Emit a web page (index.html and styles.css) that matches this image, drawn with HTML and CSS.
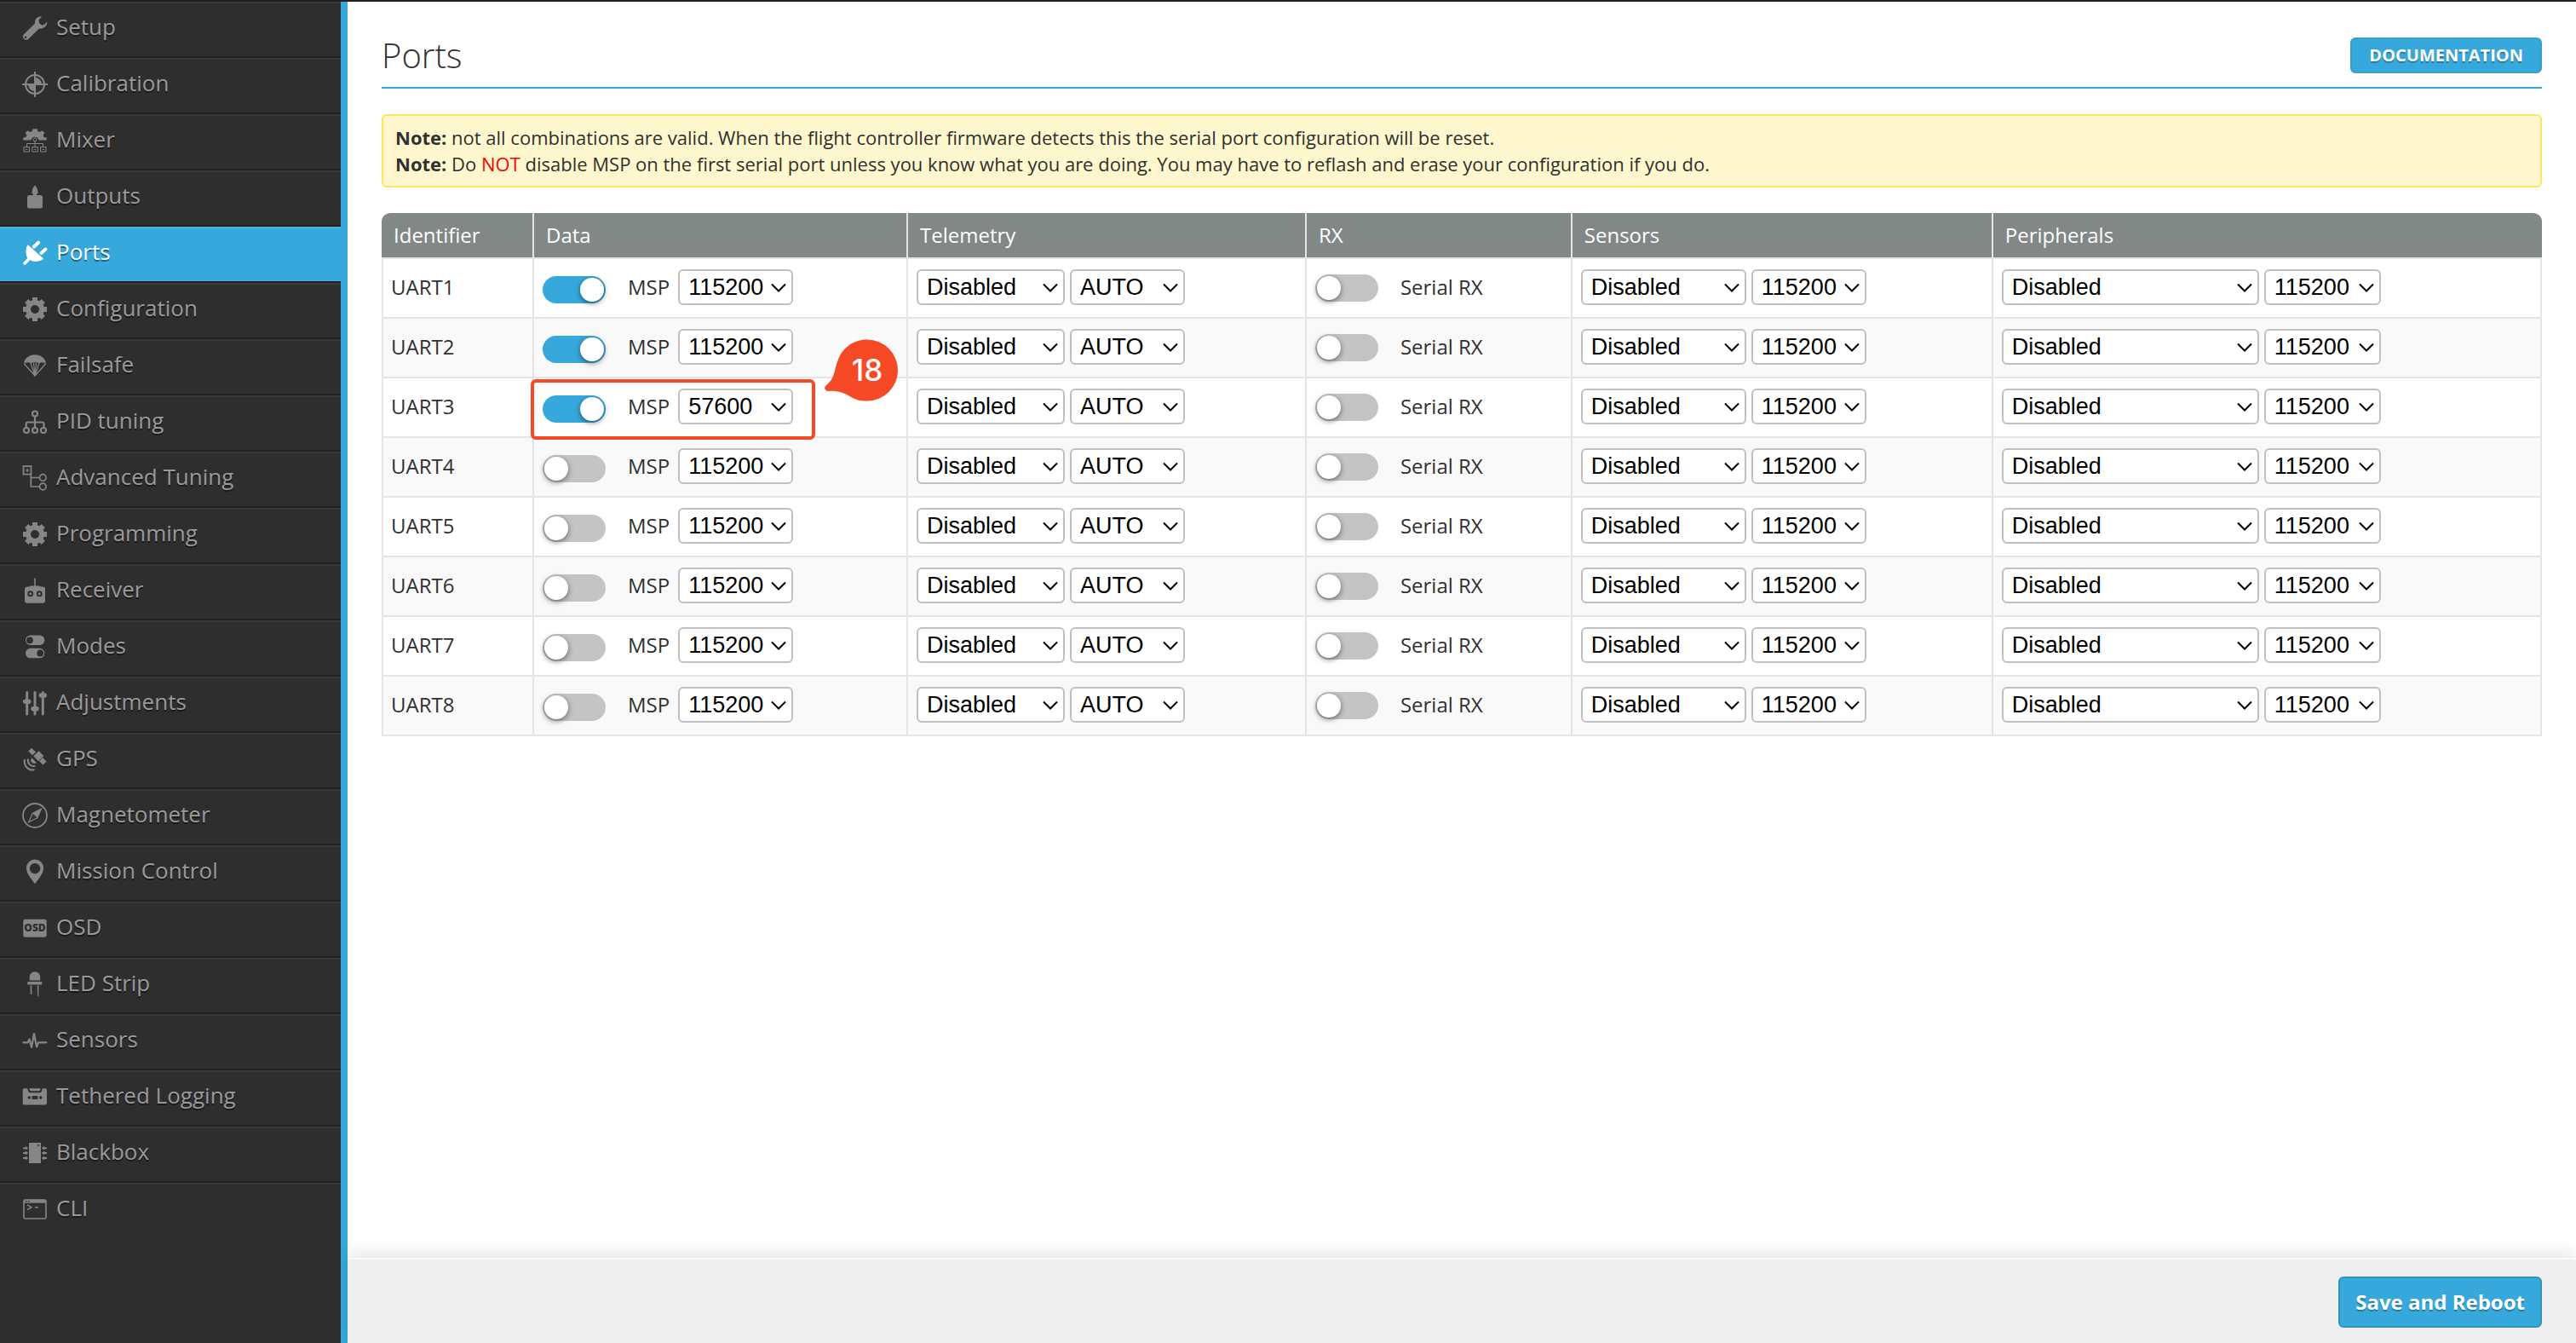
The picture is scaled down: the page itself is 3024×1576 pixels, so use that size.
FILE: index.html
```html
<!DOCTYPE html>
<html lang="en">
<head>
<meta charset="utf-8">
<title>Ports</title>
<link rel="stylesheet" href="styles.css">
</head>
<body>
<svg class="sprite" aria-hidden="true">
  <symbol id="gear" viewBox="0 0 30 30">
    <circle cx="15" cy="15" r="8" fill="none" stroke="currentColor" stroke-width="6"/>
    <g stroke="currentColor" stroke-width="6" stroke-linejoin="round">
      <path d="M15 1v5M15 24v5M1 15h5M24 15h5M5.2 5.2l3.4 3.4M21.4 21.4l3.4 3.4M24.8 5.2l-3.4 3.4M8.6 21.4l-3.4 3.4"/>
    </g>
  </symbol>
</svg>
<div class="app">
  <nav class="sidebar" aria-label="Tabs">
    <ul class="tabs">
      <li><a class="tab" href="#setup"><svg class="icon" viewBox="0 0 30 30"><path fill-rule="evenodd" d="M23 1.2C18.5.6 14.5 4 15 9.600L1.800 22.400C-1 26 3.500 30.800 7.200 28L20 15.600C25 16.500 29.600 12.500 29.300 7.300L26.300 10.700L22.800 11.500L20 9.200L19.600 5.500ZM4 24.600a1.200 1.200 0 1 0 .1 0Z"/></svg>Setup</a></li>
      <li><a class="tab" href="#calibration"><svg class="icon" viewBox="0 0 30 30"><circle cx="15" cy="15" r="11" fill="none" stroke="currentColor" stroke-width="2"/><path d="M15 0v30M0 15h30" stroke="currentColor" stroke-width="2"/><path d="M15 15V7a8 8 0 0 1 8 8ZM15 15v8a8 8 0 0 1-8-8Z"/></svg>Calibration</a></li>
      <li><a class="tab" href="#mixer"><svg class="icon" viewBox="0 0 30 30"><path d="M1.300 14.500V11.600L4.500 11 5.500 8.800 3.500 6 6.500 3.200 9.500 5 11.700 4 12.400 1.300h5.200L18.300 4 20.500 5 23.500 3.200 26.500 6 24.500 8.800 25.500 11 28.700 11.600V14.500H19.500a4.600 4.600 0 0 0-9 0Z"/><circle cx="15" cy="14" r="2" fill="none" stroke="currentColor"/><path d="M15 15v7M5.500 22v-3.500h19V22M2 22.500h6.500v5.500H2ZM11.800 22.500h6.500v5.500h-6.500ZM21.500 22.500H28v5.500h-6.500ZM4 25.300h2.500M13.800 25.300h2.500M23.500 25.300H26" fill="none" stroke="currentColor"/></svg>Mixer</a></li>
      <li><a class="tab" href="#outputs"><svg class="icon" viewBox="0 0 30 30"><path d="M15 1.500C17 3 18 6 18.700 10L18 11.500H17V13h4.500A2.500 2.500 0 0 1 24 15.500V26.500A2 2 0 0 1 22 28.500H8A2 2 0 0 1 6 26.500V15.500A2.500 2.500 0 0 1 8.500 13H13V11.500H12L11.300 10C12 6 13 3 15 1.500Z"/></svg>Outputs</a></li>
      <li><a class="tab active" href="#ports" aria-current="page"><svg class="icon" viewBox="0 0 30 30"><path d="M6.700 5.300L24 20.500C25.500 22 24 23.500 20 24.200 15 25.600 12 25 9.500 23L4 28.500C2.500 30 .2 27.300 1.500 26L6.300 21C4 17 4.300 12 5.200 7.500Z"/><path d="M14 7.500L19 2.700M22.500 15L27.300 10.600" stroke="currentColor" stroke-width="4" stroke-linecap="round"/></svg>Ports</a></li>
      <li><a class="tab" href="#configuration"><svg class="icon"><use href="#gear"/></svg>Configuration</a></li>
      <li><a class="tab" href="#failsafe"><svg class="icon" viewBox="0 0 30 30"><path d="M2 13C2.500 6.500 8 2.300 15 2.300S27.500 6.500 28 13Q24 10.200 20 12.200 15 10.200 10 12.200 6 10.200 2 13Z"/><path d="M2.500 13L15 27 27.500 13M10 12l5 15 5-15M13.500 12L15 27l1.500-15" fill="none" stroke="currentColor" stroke-width="1.200"/></svg>Failsafe</a></li>
      <li><a class="tab" href="#pid"><svg class="icon" viewBox="0 0 30 30"><g fill="none" stroke="currentColor" stroke-width="2.200"><circle cx="15" cy="5.500" r="3"/><circle cx="5" cy="25" r="3"/><circle cx="15" cy="25" r="3"/><circle cx="25" cy="25" r="3"/><path d="M15 8.500V22M4.700 22V17.500Q4.700 15.500 6.700 15.500H23.500Q25.500 15.500 25.500 17.500V22"/></g></svg>PID tuning</a></li>
      <li><a class="tab" href="#advanced"><svg class="icon" viewBox="0 0 30 30"><g fill="none" stroke="currentColor" stroke-width="1.700"><path d="M1.500 1.200h9v9.500h-9ZM10.300 10.700V25H20M10.300 14.500H20"/><circle cx="24.300" cy="14.500" r="3.800"/><circle cx="24.300" cy="25" r="3.800"/><path d="M3.800 6h4.600M6.100 3.700v4.600" stroke-width="1.200"/></g></svg>Advanced Tuning</a></li>
      <li><a class="tab" href="#programming"><svg class="icon"><use href="#gear"/></svg>Programming</a></li>
      <li><a class="tab" href="#receiver"><svg class="icon" viewBox="0 0 30 30"><path d="M14.200.5h1.600V9.500H20Q21 9.500 21.500 10.500H24A3 3 0 0 1 27 13.500V26.700A3 3 0 0 1 24 29.700H6A3 3 0 0 1 3 26.700V13.500A3 3 0 0 1 6 10.500H8.500Q9 9.500 10 9.500h4.200Z"/><g class="cut-line"><circle cx="9.700" cy="18.700" r="2.500"/><circle cx="20.300" cy="18.700" r="2.500"/></g></svg>Receiver</a></li>
      <li><a class="tab" href="#modes"><svg class="icon" viewBox="0 0 30 30"><rect x="4" y="1.500" width="22.300" height="11.500" rx="5.700"/><rect x="4" y="16.800" width="22.300" height="11.500" rx="5.700"/><g class="cut"><circle cx="9" cy="7.300" r="3.900"/><circle cx="21.200" cy="22.500" r="3.900"/></g></svg>Modes</a></li>
      <li><a class="tab" href="#adjustments"><svg class="icon" viewBox="0 0 30 30"><path d="M5.700 2.500V28M15 2.500V28M24.300 2.500V28" stroke="currentColor" stroke-width="3" stroke-linecap="round"/><path d="M3.700 13.300h4M13 21.700h4M22.300 6h4" stroke="currentColor" stroke-width="5.500" stroke-linecap="round"/></svg>Adjustments</a></li>
      <li><a class="tab" href="#gps"><svg class="icon" viewBox="0 0 30 30"><path d="M11 1.700L16 6.500 12 10.300 7.300 5.500ZM19.500 5.300L25.300 11 19 17.200 13.300 11.300ZM24 13L28.500 17.500 24.500 21.500 20 17.200ZM11.500 13.500L17 19.200C14.500 20.500 12.500 20 11 18.500S10 15 11.500 13.500Z"/><path d="M7 14.500C6 20 10 24 15.300 22.800M3 15C1.500 22.500 7 28.800 14.500 27.300" fill="none" stroke="currentColor" stroke-width="2"/></svg>GPS</a></li>
      <li><a class="tab" href="#magnetometer"><svg class="icon" viewBox="0 0 30 30"><circle cx="15" cy="15" r="14" fill="none" stroke="currentColor" stroke-width="1.800"/><path d="M22.500 7L17.800 17.800 12.300 12.400Z"/><path d="M22.500 7L17.800 17.800 7.700 22.700 12.300 12.400Z" fill="none" stroke="currentColor" stroke-width="1.200"/></svg>Magnetometer</a></li>
      <li><a class="tab" href="#mission"><svg class="icon" viewBox="0 0 30 30"><path fill-rule="evenodd" d="M15 .5A10 10 0 0 1 25 10.700C25 17 20 22 15 29.300 10 22 5 17 5 10.700A10 10 0 0 1 15 .5ZM15 5a6.200 6.200 0 1 0 .1 0Z"/></svg>Mission Control</a></li>
      <li><a class="tab" href="#osd"><svg class="icon" viewBox="0 0 30 30"><rect x="1.300" y="4.700" width="27.400" height="21" rx="2.500"/><text class="cut osd-mark" x="15" y="19" text-anchor="middle" aria-hidden="true">OSD</text></svg>OSD</a></li>
      <li><a class="tab" href="#led"><svg class="icon" viewBox="0 0 30 30"><path d="M8.700 10.500V6.500a6.200 6.200 0 0 1 12.500 0V10.500ZM6.300 12H23.200v3.500H6.300ZM9.500 16.500H11.300V27H9.800ZM17.700 16.500H19.500L19.300 29.300H18.300Z"/></svg>LED Strip</a></li>
      <li><a class="tab" href="#sensors"><svg class="icon" viewBox="0 0 30 30"><path d="M1.500 17.300H6.700L8.500 13.500 11 23 14 7 17 22.500 19 17.300H28.500" fill="none" stroke="currentColor" stroke-width="2.200" stroke-linejoin="round" stroke-linecap="round"/></svg>Sensors</a></li>
      <li><a class="tab" href="#logging"><svg class="icon" viewBox="0 0 30 30"><path d="M2.500 5.300H6L7.500 9.300Q8 10.300 9.500 10.300h11Q22 10.300 22.500 9.300L24 5.300h3A2 2 0 0 1 29 7.300v15.300A2 2 0 0 1 27 24.500H2.700A2 2 0 0 1 .7 22.500V7.300A2 2 0 0 1 2.500 5.300ZM8.500 5.300h13Q21.500 8.300 19.500 8.300h-9Q8.500 8.300 8.500 5.300Z"/><g class="cut"><circle cx="8.300" cy="16" r="1.800"/><circle cx="21.700" cy="16" r="1.800"/><rect x="11.700" y="14" width="6.600" height="4"/></g></svg>Tethered Logging</a></li>
      <li><a class="tab" href="#blackbox"><svg class="icon" viewBox="0 0 30 30"><rect x="8" y="3" width="14" height="24"/><path d="M1 9.300h5.500M1 15h5.500M1 21h5.500M23.500 9.300H29M23.500 15H29M23.500 21H29" stroke="currentColor" stroke-width="1.800"/><path d="M3.500 9.300h2M3.500 15h2M3.500 21h2M24.500 9.300h2M24.500 15h2M24.500 21h2" stroke="currentColor" stroke-width="3.400"/><circle class="cut" cx="19" cy="6" r="1"/></svg>Blackbox</a></li>
      <li><a class="tab" href="#cli"><svg class="icon" viewBox="0 0 30 30"><rect x="2" y="4" width="26" height="22" rx="1.500" fill="none" stroke="currentColor" stroke-width="1.600"/><path d="M2 4h26v3.700H2Z"/><path class="cut" d="M4 5h1.500v1.500H4ZM7 5h1.500v1.500H7Z"/><path d="M6 9.800L11 12.700 6 15.600M15 12.800h4" fill="none" stroke="currentColor" stroke-width="1.400"/></svg>CLI</a></li>
    </ul>
  </nav>
  <main class="main">
    <div class="content">
      <header class="title-bar">
        <h1>Ports</h1>
        <button class="button doc" type="button">Documentation</button>
      </header>
      <div class="note">
        <p><strong>Note:</strong> not all combinations are valid. When the flight controller firmware detects this the serial port configuration will be reset.</p>
        <p><strong>Note:</strong> Do <span class="warn">NOT</span> disable MSP on the first serial port unless you know what you are doing. You may have to reflash and erase your configuration if you do.</p>
      </div>
      <table class="ports">
        <colgroup><col class="c-id"><col class="c-data"><col class="c-tel"><col class="c-rx"><col class="c-sens"><col class="c-per"></colgroup>
        <thead><tr><th scope="col">Identifier</th><th scope="col">Data</th><th scope="col">Telemetry</th><th scope="col">RX</th><th scope="col">Sensors</th><th scope="col">Peripherals</th></tr></thead>
        <tbody>
          <tr>
            <td>UART1</td>
            <td><div class="cell"><label class="switch"><input type="checkbox" checked>MSP</label><select class="rate" aria-label="UART1 MSP rate"><option>115200</option></select></div></td>
            <td><div class="cell"><select class="tel" aria-label="UART1 telemetry"><option>Disabled</option></select><select class="rate" aria-label="UART1 telemetry rate"><option>AUTO</option></select></div></td>
            <td><div class="cell"><label class="switch rx"><input type="checkbox">Serial RX</label></div></td>
            <td><div class="cell"><select class="sens" aria-label="UART1 sensor"><option>Disabled</option></select><select class="rate" aria-label="UART1 sensor rate"><option>115200</option></select></div></td>
            <td><div class="cell"><select class="per" aria-label="UART1 peripheral"><option>Disabled</option></select><select class="rate" aria-label="UART1 peripheral rate"><option>115200</option></select></div></td>
          </tr>
          <tr>
            <td>UART2</td>
            <td><div class="cell"><label class="switch"><input type="checkbox" checked>MSP</label><select class="rate" aria-label="UART2 MSP rate"><option>115200</option></select></div></td>
            <td><div class="cell"><select class="tel" aria-label="UART2 telemetry"><option>Disabled</option></select><select class="rate" aria-label="UART2 telemetry rate"><option>AUTO</option></select></div></td>
            <td><div class="cell"><label class="switch rx"><input type="checkbox">Serial RX</label></div></td>
            <td><div class="cell"><select class="sens" aria-label="UART2 sensor"><option>Disabled</option></select><select class="rate" aria-label="UART2 sensor rate"><option>115200</option></select></div></td>
            <td><div class="cell"><select class="per" aria-label="UART2 peripheral"><option>Disabled</option></select><select class="rate" aria-label="UART2 peripheral rate"><option>115200</option></select></div></td>
          </tr>
          <tr>
            <td>UART3</td>
            <td class="marked"><div class="cell"><label class="switch"><input type="checkbox" checked>MSP</label><select class="rate" aria-label="UART3 MSP rate"><option>57600</option></select></div>
              <div class="frame"></div>
              <div class="callout"><svg viewBox="0 0 86 74" aria-hidden="true"><path d="M50 .5A36 36 0 1 1 50 72.500C42 72.500 38 71.500 33 69 24 64 18 60 5 61 0 61-1 56.500 1.500 54.500 8 49 10 45 12 37 13.500 31 14 29 16 24 21 10 34 .5 50 .5Z"/></svg><span>18</span></div>
            </td>
            <td><div class="cell"><select class="tel" aria-label="UART3 telemetry"><option>Disabled</option></select><select class="rate" aria-label="UART3 telemetry rate"><option>AUTO</option></select></div></td>
            <td><div class="cell"><label class="switch rx"><input type="checkbox">Serial RX</label></div></td>
            <td><div class="cell"><select class="sens" aria-label="UART3 sensor"><option>Disabled</option></select><select class="rate" aria-label="UART3 sensor rate"><option>115200</option></select></div></td>
            <td><div class="cell"><select class="per" aria-label="UART3 peripheral"><option>Disabled</option></select><select class="rate" aria-label="UART3 peripheral rate"><option>115200</option></select></div></td>
          </tr>
          <tr>
            <td>UART4</td>
            <td><div class="cell"><label class="switch"><input type="checkbox">MSP</label><select class="rate" aria-label="UART4 MSP rate"><option>115200</option></select></div></td>
            <td><div class="cell"><select class="tel" aria-label="UART4 telemetry"><option>Disabled</option></select><select class="rate" aria-label="UART4 telemetry rate"><option>AUTO</option></select></div></td>
            <td><div class="cell"><label class="switch rx"><input type="checkbox">Serial RX</label></div></td>
            <td><div class="cell"><select class="sens" aria-label="UART4 sensor"><option>Disabled</option></select><select class="rate" aria-label="UART4 sensor rate"><option>115200</option></select></div></td>
            <td><div class="cell"><select class="per" aria-label="UART4 peripheral"><option>Disabled</option></select><select class="rate" aria-label="UART4 peripheral rate"><option>115200</option></select></div></td>
          </tr>
          <tr>
            <td>UART5</td>
            <td><div class="cell"><label class="switch"><input type="checkbox">MSP</label><select class="rate" aria-label="UART5 MSP rate"><option>115200</option></select></div></td>
            <td><div class="cell"><select class="tel" aria-label="UART5 telemetry"><option>Disabled</option></select><select class="rate" aria-label="UART5 telemetry rate"><option>AUTO</option></select></div></td>
            <td><div class="cell"><label class="switch rx"><input type="checkbox">Serial RX</label></div></td>
            <td><div class="cell"><select class="sens" aria-label="UART5 sensor"><option>Disabled</option></select><select class="rate" aria-label="UART5 sensor rate"><option>115200</option></select></div></td>
            <td><div class="cell"><select class="per" aria-label="UART5 peripheral"><option>Disabled</option></select><select class="rate" aria-label="UART5 peripheral rate"><option>115200</option></select></div></td>
          </tr>
          <tr>
            <td>UART6</td>
            <td><div class="cell"><label class="switch"><input type="checkbox">MSP</label><select class="rate" aria-label="UART6 MSP rate"><option>115200</option></select></div></td>
            <td><div class="cell"><select class="tel" aria-label="UART6 telemetry"><option>Disabled</option></select><select class="rate" aria-label="UART6 telemetry rate"><option>AUTO</option></select></div></td>
            <td><div class="cell"><label class="switch rx"><input type="checkbox">Serial RX</label></div></td>
            <td><div class="cell"><select class="sens" aria-label="UART6 sensor"><option>Disabled</option></select><select class="rate" aria-label="UART6 sensor rate"><option>115200</option></select></div></td>
            <td><div class="cell"><select class="per" aria-label="UART6 peripheral"><option>Disabled</option></select><select class="rate" aria-label="UART6 peripheral rate"><option>115200</option></select></div></td>
          </tr>
          <tr>
            <td>UART7</td>
            <td><div class="cell"><label class="switch"><input type="checkbox">MSP</label><select class="rate" aria-label="UART7 MSP rate"><option>115200</option></select></div></td>
            <td><div class="cell"><select class="tel" aria-label="UART7 telemetry"><option>Disabled</option></select><select class="rate" aria-label="UART7 telemetry rate"><option>AUTO</option></select></div></td>
            <td><div class="cell"><label class="switch rx"><input type="checkbox">Serial RX</label></div></td>
            <td><div class="cell"><select class="sens" aria-label="UART7 sensor"><option>Disabled</option></select><select class="rate" aria-label="UART7 sensor rate"><option>115200</option></select></div></td>
            <td><div class="cell"><select class="per" aria-label="UART7 peripheral"><option>Disabled</option></select><select class="rate" aria-label="UART7 peripheral rate"><option>115200</option></select></div></td>
          </tr>
          <tr>
            <td>UART8</td>
            <td><div class="cell"><label class="switch"><input type="checkbox">MSP</label><select class="rate" aria-label="UART8 MSP rate"><option>115200</option></select></div></td>
            <td><div class="cell"><select class="tel" aria-label="UART8 telemetry"><option>Disabled</option></select><select class="rate" aria-label="UART8 telemetry rate"><option>AUTO</option></select></div></td>
            <td><div class="cell"><label class="switch rx"><input type="checkbox">Serial RX</label></div></td>
            <td><div class="cell"><select class="sens" aria-label="UART8 sensor"><option>Disabled</option></select><select class="rate" aria-label="UART8 sensor rate"><option>115200</option></select></div></td>
            <td><div class="cell"><select class="per" aria-label="UART8 peripheral"><option>Disabled</option></select><select class="rate" aria-label="UART8 peripheral rate"><option>115200</option></select></div></td>
          </tr>
        </tbody>
      </table>
    </div>
    <footer class="toolbar">
      <button class="button save" type="button">Save and Reboot</button>
    </footer>
  </main>
</div>
</body>
</html>
```
FILE: styles.css
```css
* {
  box-sizing: border-box;
}

body {
  margin: 0;
  font-family: "Open Sans", "Noto Sans", sans-serif;
  font-size: 24px;
  color: #303030;
  background: #fff;
}

.sprite {
  display: none;
}

.app {
  display: grid;
  grid-template-columns: 408px minmax(0, 1fr);
  min-height: 100vh;
  border-top: 2px solid #231f20;
}

/* Sidebar */
.sidebar {
  background: #2e2e2e;
  border-right: 8px solid #37a8db;
}

.tabs {
  margin: 0;
  padding: 0;
  list-style: none;
}

.tabs li {
  border-bottom: 2px solid #212121;
}

.tabs li:last-child {
  border-bottom: 0;
}

.tab {
  display: flex;
  align-items: center;
  gap: 10px;
  height: 64px;
  padding: 0 0 8px 26px;
  border-top: 2px solid #393939;
  color: #999;
  font-size: 26px;
  text-decoration: none;
  text-shadow: 0 2px rgba(0, 0, 0, 0.45);
}

.tab.active {
  color: #fff;
  background: #37a8db;
  border-top-color: #4bb0de;
}

.icon {
  width: 30px;
  height: 30px;
  margin-top: 4px;
  color: #868686;
  fill: currentColor;
}

.active .icon {
  color: #fff;
}

.cut {
  fill: #2e2e2e;
}

.cut-line {
  fill: none;
  stroke: #2e2e2e;
  stroke-width: 2px;
}

.osd-mark {
  font-size: 12px;
  font-weight: 800;
  text-shadow: none;
}

/* Main column */
.main {
  display: flex;
  flex-direction: column;
}

.content {
  flex: 1;
  padding: 36px 40px 40px;
}

.title-bar {
  display: flex;
  align-items: center;
  justify-content: space-between;
  padding-bottom: 10px;
  border-bottom: 2px solid #37a8db;
}

h1 {
  margin: 0;
  font-size: 40px;
  font-weight: 300;
  line-height: 54px;
}

.button {
  border: 2px solid #3394b5;
  border-radius: 6px;
  background: #37a8db;
  color: #fff;
  font-family: inherit;
  font-weight: 700;
  text-shadow: 0 2px rgba(0, 0, 0, 0.3);
  white-space: nowrap;
}

.doc {
  height: 42px;
  padding: 0 20px;
  border-color: #3a9fc8;
  font-size: 20px;
  line-height: 34px;
  text-transform: uppercase;
}

.note {
  margin-top: 30px;
  padding: 10px 14px;
  border: 2px solid #ffe55f;
  border-radius: 6px;
  background: #fff7cd;
  font-size: 22px;
  line-height: 31px;
}

.note p {
  margin: 0;
}

.warn {
  color: #f00;
}

/* Ports table */
.ports {
  width: 100%;
  margin-top: 30px;
  table-layout: fixed;
  border-collapse: separate;
  border-spacing: 0;
}

.c-id { width: 7.06%; }
.c-data { width: 17.31%; }
.c-tel { width: 18.45%; }
.c-rx { width: 12.3%; }
.c-sens { width: 19.48%; }
.c-per { width: 25.4%; }

.ports th {
  height: 54px;
  padding: 0 14px 2px;
  border-right: 2px solid #e4e4e4;
  border-bottom: 2px solid #e4e4e4;
  background: #828885;
  color: #fff;
  font-weight: 400;
  text-align: left;
}

.ports th:first-child {
  border-top-left-radius: 10px;
}

.ports th:last-child {
  border-right: 0;
  border-top-right-radius: 10px;
}

.ports td {
  height: 70px;
  padding: 0 10px;
  border-right: 2px solid #e4e4e4;
  border-bottom: 2px solid #e4e4e4;
}

.ports td:first-child {
  padding: 0 9px 4px;
  border-left: 2px solid #e4e4e4;
}

.ports tbody tr:nth-child(even) {
  background: #f9f9f9;
}

.cell {
  display: flex;
  align-items: center;
  gap: 6px;
  height: 42px;
  margin-bottom: 2px;
}

.switch {
  display: flex;
  align-items: center;
  gap: 26px;
  line-height: 40px;
  margin-right: 4px;
}

.switch input {
  appearance: none;
  width: 74px;
  height: 32px;
  margin: 6px 0 0;
  padding: 2px;
  border-radius: 16px;
  background: #c4c4c4;
}

.switch.rx input {
  margin-top: 2px;
}

.switch input::before {
  content: "";
  display: block;
  width: 28px;
  height: 28px;
  border-radius: 50%;
  background: #fff;
  box-shadow: 0 2px 6px rgba(0, 0, 0, 0.5);
}

.switch input:checked {
  background: #37a8db;
}

.switch input:checked::before {
  margin-left: auto;
}

select {
  appearance: none;
  height: 42px;
  padding: 0 24px 0 10px;
  border: 2px solid #c0c0c0;
  border-radius: 6px;
  background: #fff url("data:image/svg+xml,%3Csvg xmlns='http://www.w3.org/2000/svg' width='18' height='11' viewBox='0 0 18 11'%3E%3Cpath d='M1 1.500l8 8 8-8' fill='none' stroke='%23000' stroke-width='2'/%3E%3C/svg%3E") no-repeat right 6px center;
  color: #000;
  font-family: "Liberation Sans", Arial, sans-serif;
  font-size: 27px;
}

.rate { width: 135px; }
.tel { width: 174px; }
.sens { width: 194px; }
.per { width: 302px; }
.per + .rate { width: 137px; }

/* Step annotation over the UART3 row */
.marked {
  position: relative;
}

.frame {
  position: absolute;
  top: 1px;
  left: -4px;
  width: 334px;
  height: 71px;
  border: 4px solid #f64925;
  border-radius: 6px;
  pointer-events: none;
}

.callout {
  position: absolute;
  top: -46px;
  left: 341px;
  width: 86px;
  height: 74px;
  z-index: 1;
}

.callout svg {
  display: block;
  fill: #f64925;
}

.callout span {
  position: absolute;
  inset: 0 0 0 14px;
  color: #fff;
  font-family: Inter, sans-serif;
  font-size: 35px;
  font-weight: 500;
  line-height: 73px;
  text-align: center;
}

/* Bottom bar */
.toolbar {
  display: flex;
  justify-content: flex-end;
  padding: 20px 40px 18px;
  border-top: 2px solid #fafafa;
  background: #eee;
  box-shadow: 0 -4px 20px rgba(0, 0, 0, 0.12);
}

.save {
  height: 60px;
  padding: 0 18px 2px;
  font-size: 24px;
}
```
